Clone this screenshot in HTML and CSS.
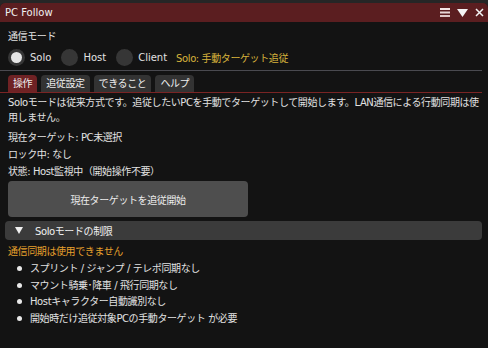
FILE: index.html
```html
<!DOCTYPE html>
<html lang="ja">
<head>
    <meta charset="UTF-8">
    <meta name="viewport" content="width=device-width, initial-scale=1.0">
    <title>PC Follow</title>
    <link rel="stylesheet" href="styles.css">
</head>
<body>
    <div class="window">
        <div class="titlebar">
            <span class="title">PC Follow</span>
            <div class="title-icons">
                <svg width="10" height="9" viewBox="0 0 10 9">
                    <rect x="0" y="0" width="10" height="2" fill="#f2e6e6"/>
                    <rect x="0" y="3.5" width="10" height="2" fill="#e9d6d6"/>
                    <rect x="0" y="7" width="10" height="2" fill="#e0c8c8"/>
                </svg>
                <svg width="11" height="8" viewBox="0 0 11 8">
                    <polygon points="0,0 11,0 5.5,8" fill="#f4f4f4"/>
                </svg>
                <svg width="9" height="9" viewBox="0 0 9 9">
                    <path d="M1 1 L8 8 M8 1 L1 8" stroke="#f4f4f4" stroke-width="1.5"/>
                </svg>
            </div>
        </div>

        <div class="content">
            <div class="label">通信モード</div>
            <div class="radio-row">
                <label class="radio"><span class="dot on"></span>Solo</label>
                <label class="radio"><span class="dot"></span>Host</label>
                <label class="radio"><span class="dot"></span>Client</label>
                <span class="mode-note">Solo: 手動ターゲット追従</span>
            </div>
            <div class="separator"></div>

            <div class="tabs">
                <span class="tab active">操作</span>
                <span class="tab">追従設定</span>
                <span class="tab">できること</span>
                <span class="tab">ヘルプ</span>
            </div>

            <p class="desc">Soloモードは従来方式です。追従したいPCを手動でターゲットして開始します。LAN通信による行動同期は使用しません。</p>

            <div class="info">
                <div>現在ターゲット: PC未選択</div>
                <div>ロック中: なし</div>
                <div>状態: Host監視中（開始操作不要）</div>
            </div>

            <button class="follow-btn">現在ターゲットを追従開始</button>

            <div class="section-header">
                <span class="arrow"></span>
                <span>Soloモードの制限</span>
            </div>

            <div class="warn">通信同期は使用できません</div>
            <ul class="limits">
                <li>スプリント / ジャンプ / テレポ同期なし</li>
                <li>マウント騎乗･降車 / 飛行同期なし</li>
                <li>Hostキャラクター自動識別なし</li>
                <li>開始時だけ追従対象PCの手動ターゲット が必要</li>
            </ul>
        </div>
    </div>
</body>
</html>
```

FILE: styles.css
```css
body {
    margin: 0;
    background-color: #262626;
    font-family: "DejaVu Sans", "Noto Sans CJK JP", sans-serif;
    font-size: 10px;
    letter-spacing: -0.4px;
    color: #e2e2e2;
    overflow: hidden;
}
.window {
    margin-top: 3px;
    height: 345px;
    background: #131313;
    border-radius: 5px 5px 0 0;
    overflow: hidden;
}
.titlebar {
    height: 19px;
    background: #5b1e20;
    display: flex;
    align-items: center;
    justify-content: space-between;
    padding: 0 4px 0 5px;
}
.title {
    color: #f0f0f0;
    letter-spacing: 0;
}
.title-icons {
    display: flex;
    align-items: center;
    gap: 7px;
}
.title-icons svg {
    display: block;
}
.content {
    padding: 8px 6px 0 8px;
}
.label {
    line-height: 14px;
}
.radio-row {
    display: flex;
    align-items: center;
    height: 17px;
    margin-top: 5px;
}
.radio {
    display: flex;
    align-items: center;
    gap: 5px;
    margin-right: 10px;
    letter-spacing: 0;
}
.dot {
    width: 17px;
    height: 17px;
    border-radius: 50%;
    background: #363636;
    display: flex;
    align-items: center;
    justify-content: center;
}
.dot.on::after {
    content: "";
    width: 11px;
    height: 11px;
    border-radius: 50%;
    background: #e6e6e6;
}
.mode-note {
    color: #d8b33c;
    margin-left: -1px;
}
.separator {
    height: 1px;
    background: #4a4a50;
    margin: 4px 0 0 -8px;
}
.tabs {
    display: flex;
    gap: 4px;
    margin-top: 4px;
    border-bottom: 1px solid #7a2424;
    margin-left: -8px;
    padding-left: 8px;
}
.tab {
    height: 17px;
    line-height: 17px;
    padding: 0 5px;
    background: #333333;
    border-radius: 4px 4px 0 0;
    color: #eeeeee;
}
.tab.active {
    background: #6f2224;
}
.desc {
    margin: 2px 0 0;
    line-height: 15px;
}
.info {
    margin-top: 5px;
}
.info div {
    line-height: 15px;
    margin-bottom: 2px;
}
.follow-btn {
    display: block;
    width: 240px;
    height: 36px;
    margin-top: 1px;
    background: #4e4e4e;
    border: none;
    border-radius: 4px;
    color: #ececec;
    font-family: inherit;
    font-size: 10px;
    letter-spacing: -0.4px;
}
.section-header {
    display: flex;
    align-items: center;
    height: 19px;
    margin: 4px 0 0 -3px;
    padding-left: 10px;
    background: #3b3b3b;
    border-radius: 4px;
    color: #f0f0f0;
}
.arrow {
    width: 0;
    height: 0;
    border-left: 4px solid transparent;
    border-right: 4px solid transparent;
    border-top: 7px solid #f0f0f0;
    margin-right: 12px;
}
.warn {
    color: #e6a02c;
    line-height: 15px;
    margin-top: 4px;
}
.limits {
    list-style: none;
    margin: 2px 0 0;
    padding: 0;
}
.limits li {
    position: relative;
    line-height: 15px;
    margin-bottom: 1.5px;
    padding-left: 22px;
}
.limits li::before {
    content: "";
    position: absolute;
    left: 9px;
    top: 5px;
    width: 5px;
    height: 5px;
    border-radius: 50%;
    background: #e8e8e8;
}
```
